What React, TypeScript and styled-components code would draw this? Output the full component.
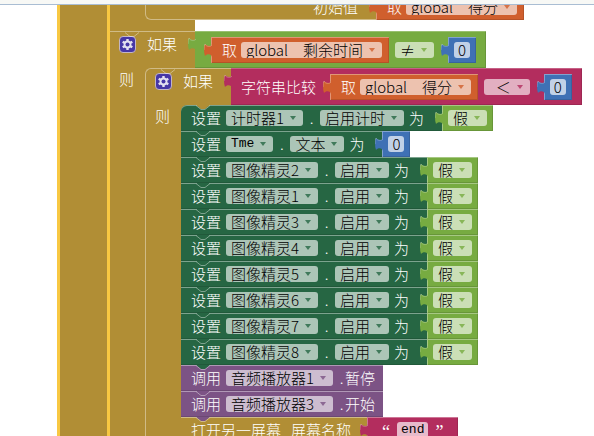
import React from 'react';
import styled, { createGlobalStyle } from 'styled-components';

const gold = '#b18e35';
const forest = '#266643';
const lime = '#77ab41';
const orange = '#d05f2d';
const magenta = '#b32d5e';
const blue = '#3f71b5';
const purple = '#7c5385';
const yellow = '#f8c842';

const GlobalStyle = createGlobalStyle`
  * { box-sizing: border-box; }
  body { margin: 0; background: #fff; }
  body, select, input, button {
    font-family: "Noto Sans CJK SC", sans-serif;
    font-size: 15px;
    font-weight: 300;
  }
`;

const Page = styled.div`
  height: 100vh;
  overflow: hidden;
  display: flex;
  flex-direction: column;
  color: #fff;
  line-height: 16px;
`;

const TopEdge = styled.header`
  flex: none;
  height: 5px;
  background: #f7f8f5;
  border-bottom: 1px solid #a9bdd3;
`;

const Workspace = styled.main`
  flex: 1;
  min-height: 0;
  display: flex;
  padding-left: 57px;
  overflow: hidden;
  white-space: nowrap;
`;

const Spine = styled.div`
  flex: none;
  width: 50px;
  background: ${gold};
  border-left: 3px solid ${yellow};
`;

const Procedure = styled.div`
  flex: 1;
  border-left: 3px solid ${yellow};
`;

const Line = styled.div<{ $backed?: boolean }>`
  display: flex;
  align-items: flex-start;
  ${p => p.$backed && `background: linear-gradient(${gold}, ${gold}) 0 0 / 60px 100% no-repeat;`}
`;

const CutLine = styled(Line)`
  height: 15px;
  align-items: flex-end;
  overflow: hidden;
`;

const Gutter = styled.div`
  flex: none;
  align-self: stretch;
  width: 35px;
  padding: 3px 0 0 9px;
  background: ${gold};
`;

const InnerGutter = styled(Gutter)`
  width: 36px;
  border-left: 1px solid #d0bb86;
`;

const Joint = styled.div`
  width: 85px;
  height: 11px;
  background: ${gold};
`;

const InitBody = styled.div`
  display: flex;
  align-items: center;
  justify-content: flex-end;
  width: 231px;
  height: 26px;
  padding-right: 18px;
  background: ${gold};
  border: 1px solid #d0bb86;
  border-width: 0 0 1px 1px;
  border-bottom-left-radius: 6px;
`;

const IfHead = styled.div<{ $nested?: boolean }>`
  position: relative;
  display: flex;
  align-items: flex-start;
  gap: 11px;
  width: ${p => (p.$nested ? 86 : 85)}px;
  height: 37px;
  padding: 4px 0 0 9px;
  background: ${gold};
  border-top: 1px solid #d0bb86;
  ${p => p.$nested && `border-left: 1px solid #d0bb86; border-top-left-radius: 6px;`}
`;

const Stack = styled.div`
  flex: 1;
`;

const Body = styled.div<{ $color: string; $first?: boolean; $tail?: number }>`
  position: relative;
  display: flex;
  align-items: center;
  gap: 5px;
  height: 26px;
  padding: 0 ${p => p.$tail ?? 18}px 0 10px;
  background: ${p => p.$color};
  border-top-left-radius: ${p => (p.$first ? 6 : 0)}px;
  box-shadow: inset 0 1px rgba(255, 255, 255, 0.4), inset 0 -1px rgba(0, 0, 0, 0.12);
`;

const Value = styled.div<{ $color: string; $pad?: string; $gap?: number }>`
  position: relative;
  display: flex;
  align-items: center;
  gap: ${p => p.$gap ?? 4}px;
  height: 26px;
  padding: ${p => p.$pad ?? '0 6px'};
  background: ${p => p.$color};
  box-shadow: inset 1px 1px rgba(255, 255, 255, 0.35), inset -1px -1px rgba(0, 0, 0, 0.12);
`;

const Compare = styled.div<{ $color: string; $lead: number }>`
  position: relative;
  display: flex;
  align-items: flex-start;
  gap: 6px;
  height: 37px;
  padding: 6px 10px 0 ${p => p.$lead}px;
  background: ${p => p.$color};
  box-shadow: inset 0 1px rgba(255, 255, 255, 0.25), inset -1px -1px rgba(0, 0, 0, 0.12);
`;

const CompareSlot = styled.div`
  display: flex;
  align-items: center;
  height: 26px;
`;

const SpacedSlot = styled(CompareSlot)`
  padding-left: 8px;
`;

const Dot = styled.span`
  display: inline-block;
  width: 7px;
  text-align: center;
`;

const Phrase = styled.span`
  margin-left: 5px;
`;

const Quote = styled.span`
  font-family: "Liberation Serif", serif;
  font-size: 18px;
  padding-top: 4px;
`;

const PickerBox = styled.label<{ $color: string }>`
  position: relative;
  display: flex;
  height: 16px;
  border-radius: 3px;
  background: rgba(255, 255, 255, 0.62);
  &::after {
    content: '';
    position: absolute;
    right: 7px;
    top: 6px;
    border: 3px solid transparent;
    border-top: 4px solid ${p => p.$color};
    border-bottom: 0;
    opacity: 0.8;
    pointer-events: none;
  }
`;

const Select = styled.select<{ $mono?: boolean }>`
  appearance: none;
  field-sizing: content;
  height: 16px;
  margin: 0;
  padding: 0 19px 0 5px;
  border: 0;
  border-radius: 3px;
  outline: 0;
  background: transparent;
  color: #000;
  line-height: 16px;
  ${p => p.$mono && `font-family: "Liberation Mono", monospace; font-size: 13px; font-weight: 400;`}
`;

const Field = styled.input<{ $mono?: boolean }>`
  field-sizing: content;
  height: 16px;
  margin: 0;
  padding: 0 4px;
  border: 0;
  border-radius: 3px;
  outline: 0;
  background: rgba(255, 255, 255, 0.68);
  color: #000;
  line-height: 16px;
  ${p => p.$mono && `font-family: "Liberation Mono", monospace; font-size: 13px; font-weight: 400;`}
`;

const GearButton = styled.button`
  display: block;
  flex: none;
  width: 17px;
  height: 17px;
  padding: 0;
  border: 0;
  background: none;
  svg { display: block; }
`;

const NotchSvg = styled.svg`
  position: absolute;
  left: 15px;
  top: 0;
`;

const TabSvg = styled.svg`
  position: absolute;
  left: -7px;
  top: 4px;
`;

const Notch = ({ color }: { color: string }) => (
  <NotchSvg width="15" height="6" aria-hidden="true">
    <path d="M0 0L5 4H9L14 0Z" fill={color} />
    <path d="M0 .5L5 4.5H9L14 .5" fill="none" stroke="#fff" strokeOpacity=".4" />
  </NotchSvg>
);

const Tab = ({ color }: { color: string }) => (
  <TabSvg width="8" height="18" aria-hidden="true">
    <path d="M8 3C8 6 2 5 1 3Q0 4 0 8Q0 13 1 15C3 12 8 13 8 16Z" fill={color} />
    <path d="M8 4C7 6 2 6 1 3Q0 5 0 9" fill="none" stroke="#fff" strokeOpacity=".25" />
  </TabSvg>
);

const Gear = () => (
  <GearButton aria-label="设置项">
    <svg width="17" height="17" viewBox="0 0 17 17">
      <rect x=".5" y=".5" width="16" height="16" rx="3.5" fill="#4637a6" stroke="#c3b6c4" />
      <path d="M8.5 3v11M3.7 5.7l9.6 5.6M3.7 11.3l9.6-5.6" stroke="#e3e1f0" strokeWidth="2.4" />
      <circle cx="8.5" cy="8.5" r="3.9" fill="#e3e1f0" />
      <circle cx="8.5" cy="8.5" r="2" fill="#4637a6" />
    </svg>
  </GearButton>
);

type PickerProps = { value: string; color: string; name: string; mono?: boolean };

const Picker = ({ value, color, name, mono }: PickerProps) => (
  <PickerBox $color={color}>
    <Select $mono={mono} aria-label={name} defaultValue={value}>
      <option value={value}>{value}</option>
    </Select>
  </PickerBox>
);

const Getter = ({ variable }: { variable: string }) => (
  <Value $color={orange} $pad="0 7px 0 11px">
    <Tab color={orange} />
    <span>取</span>
    <Picker value={`global\u3000${variable}`} color={orange} name="变量" />
  </Value>
);

const NumberValue = () => (
  <Value $color={blue}>
    <Tab color={blue} />
    <Field aria-label="数字" defaultValue="0" />
  </Value>
);

const FalseValue = () => (
  <Value $color={lime}>
    <Tab color={lime} />
    <Picker value="假" color={lime} name="逻辑值" />
  </Value>
);

type SetterProps = {
  component: string;
  property: string;
  first?: boolean;
  mono?: boolean;
  children: React.ReactNode;
};

const Setter = ({ component, property, first, mono, children }: SetterProps) => (
  <Line $backed={first}>
    <Body $color={forest} $first={first}>
      <Notch color={first ? gold : forest} />
      <span>设置</span>
      <Picker value={component} color={forest} name="组件" mono={mono} />
      <Dot>.</Dot>
      <Picker value={property} color={forest} name="属性" />
      <span>为</span>
    </Body>
    {children}
  </Line>
);

const Call = ({ component, method, above }: { component: string; method: string; above: string }) => (
  <Line>
    <Body $color={purple} $tail={8}>
      <Notch color={above} />
      <span>调用</span>
      <Picker value={component} color={purple} name="组件" />
      <span><Dot>.</Dot>{method}</span>
    </Body>
  </Line>
);

const sprites = [2, 1, 3, 4, 5, 6, 7, 8];

export default function App() {
  return (
    <Page>
      <GlobalStyle />
      <TopEdge />
      <Workspace>
        <Spine />
        <Procedure>
          <CutLine $backed>
            <Gutter />
            <InitBody>初始值</InitBody>
            <Getter variable="得分" />
          </CutLine>
          <Joint />
          <Line>
            <IfHead>
              <Notch color={gold} />
              <Gear />
              <span>如果</span>
            </IfHead>
            <Compare $color={lime} $lead={16}>
              <Tab color={lime} />
              <Getter variable="剩余时间" />
              <CompareSlot><Picker value="≠" color={lime} name="比较" /></CompareSlot>
              <SpacedSlot><NumberValue /></SpacedSlot>
            </Compare>
          </Line>
          <Line>
            <Gutter>则</Gutter>
            <Stack>
              <Line $backed>
                <IfHead $nested>
                  <Notch color={gold} />
                  <Gear />
                  <span>如果</span>
                </IfHead>
                <Compare $color={magenta} $lead={10}>
                  <Tab color={magenta} />
                  <CompareSlot>字符串比较</CompareSlot>
                  <SpacedSlot><Getter variable="得分" /></SpacedSlot>
                  <CompareSlot>
                    <Picker value={'\u00a0\u00a0＜'} color={magenta} name="文本比较" />
                  </CompareSlot>
                  <SpacedSlot><NumberValue /></SpacedSlot>
                </Compare>
              </Line>
              <Line>
                <InnerGutter>则</InnerGutter>
                <Stack>
                  <Setter component="计时器1" property="启用计时" first><FalseValue /></Setter>
                  <Setter component="Tme" property="文本" mono><NumberValue /></Setter>
                  {sprites.map(n => (
                    <Setter key={n} component={`图像精灵${n}`} property="启用"><FalseValue /></Setter>
                  ))}
                  <Call component="音频播放器1" method="暂停" above={forest} />
                  <Call component="音频播放器3" method="开始" above={purple} />
                  <Line>
                    <Body $color={gold} $tail={16}>
                      <Notch color={purple} />
                      <span>打开另一屏幕</span>
                      <Phrase>屏幕名称</Phrase>
                    </Body>
                    <Value $color={magenta} $pad="0 15px" $gap={7}>
                      <Tab color={magenta} />
                      <Quote>“</Quote>
                      <Field aria-label="文本" defaultValue="end" $mono />
                      <Quote>”</Quote>
                    </Value>
                  </Line>
                </Stack>
              </Line>
            </Stack>
          </Line>
        </Procedure>
      </Workspace>
    </Page>
  );
}
